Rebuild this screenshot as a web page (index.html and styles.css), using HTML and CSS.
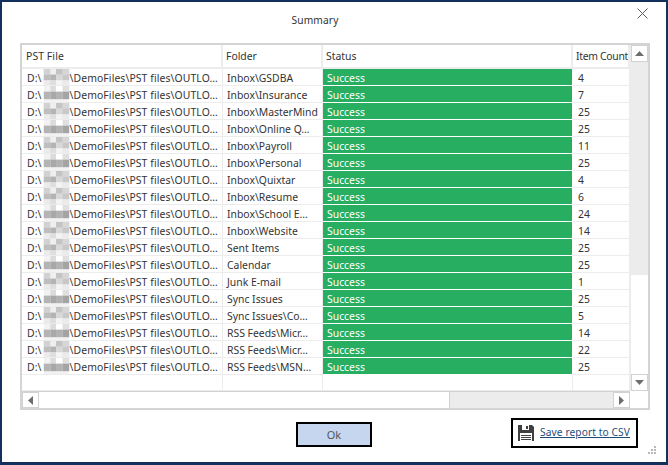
FILE: index.html
```html
<!DOCTYPE html>
<html lang="en">
<head>
<meta charset="utf-8">
<title>Summary</title>
<link rel="stylesheet" href="styles.css">
</head>
<body>
<svg class="defs" width="0" height="0" aria-hidden="true">
<symbol id="ma" viewBox="0 0 27 17"><rect width="27" height="17" fill="#e2e2e2"/><rect x="0" y="0" width="7" height="6" fill="#d2d2d2"/><rect x="7" y="0" width="6" height="6" fill="#efefef"/><rect x="13" y="0" width="7" height="6" fill="#c4c4c4"/><rect x="20" y="0" width="7" height="6" fill="#d6d6d6"/><rect x="0" y="6" width="7" height="6" fill="#bebebe"/><rect x="7" y="6" width="6" height="6" fill="#b4b4b4"/><rect x="13" y="6" width="7" height="6" fill="#d8d8d8"/><rect x="20" y="6" width="7" height="6" fill="#c8c8c8"/><rect x="0" y="12" width="7" height="5" fill="#ebebeb"/><rect x="7" y="12" width="6" height="5" fill="#dedede"/><rect x="13" y="12" width="7" height="5" fill="#f4f4f4"/><rect x="20" y="12" width="7" height="5" fill="#ebebeb"/></symbol>
<symbol id="mb" viewBox="0 0 27 17"><rect width="27" height="17" fill="#f2f2f2"/><rect x="7" y="0" width="6" height="6" fill="#dcdcdc"/><rect x="13" y="0" width="7" height="6" fill="#ffffff"/><rect x="20" y="0" width="7" height="6" fill="#e0e0e0"/><rect x="0" y="6" width="7" height="8" fill="#b4b4b4"/><rect x="7" y="6" width="6" height="8" fill="#a8a8a8"/><rect x="13" y="6" width="7" height="8" fill="#b2b2b2"/><rect x="20" y="6" width="7" height="8" fill="#a4a4a4"/></symbol>
</svg>
<main class="window">
  <header class="titlebar">
    <h1 class="title">Summary</h1>
    <svg class="close" width="11" height="11" viewBox="0 0 11 11" aria-label="Close"><path d="M.5.5l10 10M10.500.5l-10 10" stroke="#5a5a5a" fill="none"/></svg>
  </header>
  <section class="gridbox">
    <div class="gridarea">
      <div class="datagrid">
        <div class="row head"><div class="c c1">PST File</div><div class="c c2">Folder</div><div class="c c3">Status</div><div class="c c4">Item Count</div></div>
        <div class="row"><div class="c c1">D:\<svg class="mask"><use href="#ma"/></svg>\DemoFiles\PST files\OUTLO…</div><div class="c c2">Inbox\GSDBA</div><div class="c c3">Success</div><div class="c c4">4</div></div>
        <div class="row"><div class="c c1">D:\<svg class="mask"><use href="#mb"/></svg>\DemoFiles\PST files\OUTLO…</div><div class="c c2">Inbox\Insurance</div><div class="c c3">Success</div><div class="c c4">7</div></div>
        <div class="row"><div class="c c1">D:\<svg class="mask"><use href="#ma"/></svg>\DemoFiles\PST files\OUTLO…</div><div class="c c2">Inbox\MasterMind</div><div class="c c3">Success</div><div class="c c4">25</div></div>
        <div class="row"><div class="c c1">D:\<svg class="mask"><use href="#mb"/></svg>\DemoFiles\PST files\OUTLO…</div><div class="c c2">Inbox\Online Q…</div><div class="c c3">Success</div><div class="c c4">25</div></div>
        <div class="row"><div class="c c1">D:\<svg class="mask"><use href="#ma"/></svg>\DemoFiles\PST files\OUTLO…</div><div class="c c2">Inbox\Payroll</div><div class="c c3">Success</div><div class="c c4">11</div></div>
        <div class="row"><div class="c c1">D:\<svg class="mask"><use href="#mb"/></svg>\DemoFiles\PST files\OUTLO…</div><div class="c c2">Inbox\Personal</div><div class="c c3">Success</div><div class="c c4">25</div></div>
        <div class="row"><div class="c c1">D:\<svg class="mask"><use href="#ma"/></svg>\DemoFiles\PST files\OUTLO…</div><div class="c c2">Inbox\Quixtar</div><div class="c c3">Success</div><div class="c c4">4</div></div>
        <div class="row"><div class="c c1">D:\<svg class="mask"><use href="#ma"/></svg>\DemoFiles\PST files\OUTLO…</div><div class="c c2">Inbox\Resume</div><div class="c c3">Success</div><div class="c c4">6</div></div>
        <div class="row"><div class="c c1">D:\<svg class="mask"><use href="#mb"/></svg>\DemoFiles\PST files\OUTLO…</div><div class="c c2">Inbox\School E…</div><div class="c c3">Success</div><div class="c c4">24</div></div>
        <div class="row"><div class="c c1">D:\<svg class="mask"><use href="#ma"/></svg>\DemoFiles\PST files\OUTLO…</div><div class="c c2">Inbox\Website</div><div class="c c3">Success</div><div class="c c4">14</div></div>
        <div class="row"><div class="c c1">D:\<svg class="mask"><use href="#ma"/></svg>\DemoFiles\PST files\OUTLO…</div><div class="c c2">Sent Items</div><div class="c c3">Success</div><div class="c c4">25</div></div>
        <div class="row"><div class="c c1">D:\<svg class="mask"><use href="#mb"/></svg>\DemoFiles\PST files\OUTLO…</div><div class="c c2">Calendar</div><div class="c c3">Success</div><div class="c c4">25</div></div>
        <div class="row"><div class="c c1">D:\<svg class="mask"><use href="#ma"/></svg>\DemoFiles\PST files\OUTLO…</div><div class="c c2">Junk E-mail</div><div class="c c3">Success</div><div class="c c4">1</div></div>
        <div class="row"><div class="c c1">D:\<svg class="mask"><use href="#mb"/></svg>\DemoFiles\PST files\OUTLO…</div><div class="c c2">Sync Issues</div><div class="c c3">Success</div><div class="c c4">25</div></div>
        <div class="row"><div class="c c1">D:\<svg class="mask"><use href="#ma"/></svg>\DemoFiles\PST files\OUTLO…</div><div class="c c2">Sync Issues\Co…</div><div class="c c3">Success</div><div class="c c4">5</div></div>
        <div class="row"><div class="c c1">D:\<svg class="mask"><use href="#mb"/></svg>\DemoFiles\PST files\OUTLO…</div><div class="c c2">RSS Feeds\Micr…</div><div class="c c3">Success</div><div class="c c4">14</div></div>
        <div class="row"><div class="c c1">D:\<svg class="mask"><use href="#ma"/></svg>\DemoFiles\PST files\OUTLO…</div><div class="c c2">RSS Feeds\Micr…</div><div class="c c3">Success</div><div class="c c4">22</div></div>
        <div class="row"><div class="c c1">D:\<svg class="mask"><use href="#mb"/></svg>\DemoFiles\PST files\OUTLO…</div><div class="c c2">RSS Feeds\MSN…</div><div class="c c3">Success</div><div class="c c4">25</div></div>
        <div class="row blank"><div class="c c1"></div><div class="c c2"></div><div class="c c3 empty"></div><div class="c c4"></div></div>
      </div>
      <div class="vscroll">
        <div class="sbtn"><svg width="9" height="5" viewBox="0 0 9 5"><path d="M4.500 0L9 5H0z" fill="#6d6d6d"/></svg></div>
        <div class="vtrack"></div>
        <div class="vthumb"></div>
        <div class="sbtn"><svg width="9" height="5" viewBox="0 0 9 5"><path d="M0 0h9L4.500 5z" fill="#6d6d6d"/></svg></div>
      </div>
    </div>
    <div class="hscroll">
      <div class="sbtn hbtn"><svg width="5" height="9" viewBox="0 0 5 9"><path d="M5 0v9L0 4.500z" fill="#6d6d6d"/></svg></div>
      <div class="hthumb"></div>
      <div class="htrack"></div>
      <div class="sbtn hbtn"><svg width="5" height="9" viewBox="0 0 5 9"><path d="M0 0l5 4.500L0 9z" fill="#6d6d6d"/></svg></div>
    </div>
  </section>
  <footer class="actions">
    <button class="ok" type="button">Ok</button>
    <a class="save" href="#">
      <svg class="disk" width="16" height="16" viewBox="0 0 16 16" aria-hidden="true"><path d="M0 0h14l2 2v14H0z" fill="#3f3f3f"/><path d="M4 0h7v5H4z" fill="#fff"/><path d="M8 1h2v3H8z" fill="#3f3f3f"/><path d="M2 8h12v8H2z" fill="#fff"/><path d="M3 10h10v1H3zM3 12h10v1H3zM3 14h10v1H3z" fill="#3f3f3f"/></svg>
      <span class="savetext">Save report to CSV</span>
    </a>
    <svg class="grip" width="8" height="8" viewBox="0 0 8 8" aria-hidden="true"><path d="M6 0h2v2H6zM3 3h2v2H3zM6 3h2v2H6zM0 6h2v2H0zM3 6h2v2H3zM6 6h2v2H6z" fill="#b9b9b9"/></svg>
  </footer>
</main>
</body>
</html>
```

FILE: styles.css
```css
* { box-sizing: border-box; }
html, body { margin: 0; padding: 0; }
body {
  width: 668px;
  height: 465px;
  overflow: hidden;
  background: #fff;
  font-family: "Noto Sans", "Open Sans", sans-serif;
  font-size: 10.4px;
  color: #333;
}
.defs { display: block; height: 0; }
.window {
  width: 668px;
  height: 465px;
  border: solid #14315e;
  border-width: 2px 2px 3px 2px;
  background: #fff;
  display: flex;
  flex-direction: column;
  padding: 0 18px 0 18px;
  position: relative;
}
.titlebar {
  height: 41px;
  flex: none;
  display: flex;
  justify-content: center;
  align-items: flex-start;
  padding-right: 38px;
}
.title {
  margin: 10px 0 0;
  font-size: 10.2px;
  font-weight: 400;
  line-height: 16px;
  letter-spacing: .15px;
  color: #333;
}
.close { position: absolute; right: 18px; top: 6px; }
.gridbox {
  width: 630px;
  height: 367px;
  flex: none;
  border: 2px solid #d4d4d4;
  display: flex;
  flex-direction: column;
}
.gridarea { display: flex; height: 346px; flex: none; }
.datagrid { width: 608px; flex: none; }
.row {
  display: grid;
  grid-template-columns: 201px 100px 250px 57px;
  height: 17px;
  line-height: 16px;
}
.row.head { height: 24px; line-height: 23px; }
.row.blank { height: 16px; }
.c {
  white-space: nowrap;
  overflow: hidden;
  border-right: 1px solid #ececec;
  border-bottom: 1px solid #ececec;
  padding: 1px 0 0 4px;
  display: flex;
  align-items: center;
}
.c1 { letter-spacing: .1px; padding-left: 5px; }
.c4 { padding-left: 5px; }
.head .c { padding: 1px 0 0 3px; border-right: 2px solid #ececec; border-bottom: 2px solid #ececec; }
.head .c1 { padding-left: 4px; }
.head .c4 { letter-spacing: -.3px; padding-right: 0; }
.c3 {
  background: #27ae60;
  color: #fff;
  border-right: 1px solid #fff;
  border-bottom: 1px solid #fff;
}
.head .c3, .c3.empty { background: #fff; color: #333; }
.head .c3 { border-right: 2px solid #ececec; border-bottom: 2px solid #ececec; }
.c3.empty { border-bottom: 1px solid #ececec; border-right: 1px solid #ececec; }
.mask { width: 27px; height: 16px; flex: none; margin: -1px 0 0 1px; }
.vscroll {
  width: 18px;
  flex: none;
  display: flex;
  flex-direction: column;
  background: #ececec;
  padding-left: 1px;
}
.sbtn {
  height: 17px;
  flex: none;
  background: #fff;
  border: 1px solid #d2d2d2;
  display: flex;
  align-items: center;
  justify-content: center;
}
.vtrack { height: 213px; flex: none; }
.vthumb { flex: 1; background: #fff; }
.hscroll {
  display: flex;
  height: 17px;
  flex: none;
  width: 608px;
  border-top: 1px solid #d2d2d2;
  background: #ececec;
}
.hbtn { width: 17px; height: 16px; }
.hthumb { width: 411px; flex: none; background: #fff; border-right: 1px solid #d2d2d2; }
.htrack { flex: 1; }
.actions { flex: 1; position: relative; display: block; }
.ok {
  position: absolute;
  left: 276px;
  top: 12px;
  width: 76px;
  height: 25px;
  background: #c5d6ee;
  border: 2px solid #000;
  font: inherit;
  font-size: 11px;
  color: #555;
  padding: 0;
}
.save {
  position: absolute;
  left: 491px;
  top: 8px;
  width: 127px;
  height: 30px;
  border: 2px solid #000;
  display: flex;
  align-items: center;
  padding: 0 0 3px 5px;
  gap: 6px;
  color: #1f4e79;
  font-size: 10.2px;
  white-space: nowrap;
  text-decoration: none;
}
.disk { margin-top: 3px; }
.savetext { text-decoration: underline; letter-spacing: .1px; }
.grip { position: absolute; right: -8px; bottom: 8px; }
```
